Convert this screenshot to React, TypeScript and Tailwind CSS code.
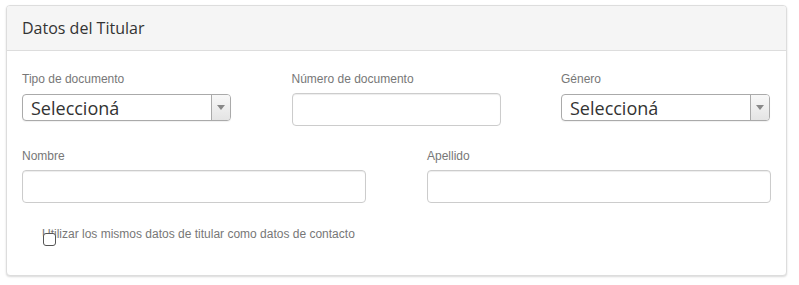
import React from "react";

function SelectBox() {
  return (
    <div className="flex h-[27px] w-full items-stretch overflow-hidden rounded-[4px] border border-[#aaa] bg-white shadow-[0_1px_1px_rgba(0,0,0,0.06)]">
      <div className="flex flex-1 items-center pl-[8px] font-['Open_Sans',sans-serif] text-[18px] leading-none text-[#333]">
        Seleccioná
      </div>
      <div className="flex w-[19px] items-center justify-center border-l border-[#aaa] bg-gradient-to-b from-[#f8f8f8] to-[#e4e4e4]">
        <span className="block h-0 w-0 border-x-[4px] border-t-[5px] border-x-transparent border-t-[#888]" />
      </div>
    </div>
  );
}

function TextInput() {
  return (
    <div className="h-[33px] w-full rounded-[4px] border border-[#ccc] bg-white shadow-[inset_0_1px_1px_rgba(0,0,0,0.075)]" />
  );
}

function Label({ children }: { children: React.ReactNode }) {
  return (
    <div className="font-['Liberation_Sans',Arial,sans-serif] text-[12px] leading-[16px] text-[#777]">
      {children}
    </div>
  );
}

export default function App() {
  return (
    <div className="h-[285px] w-[799px] bg-white pl-[6px] pt-[5px]">
      <div className="h-[271px] w-[781px] overflow-hidden rounded-[4px] border border-[#ddd] bg-white shadow-[0_1px_2px_rgba(0,0,0,0.15)]">
        <div className="flex h-[45px] items-center border-b border-[#ddd] bg-[#f5f5f5] px-[15px] font-['Open_Sans',sans-serif] text-[16px] text-[#333]">
          Datos del Titular
        </div>
        <div className="px-[15px] pt-[20px]">
          <div className="grid grid-cols-[209px_209px_209px] gap-x-[60.5px]">
            <div>
              <Label>Tipo de documento</Label>
              <div className="mt-[7px]">
                <SelectBox />
              </div>
            </div>
            <div>
              <Label>Número de documento</Label>
              <div className="mt-[6px]">
                <TextInput />
              </div>
            </div>
            <div>
              <Label>Género</Label>
              <div className="mt-[7px]">
                <SelectBox />
              </div>
            </div>
          </div>
          <div className="mt-[22px] grid grid-cols-[344px_344px] gap-x-[61px]">
            <div>
              <Label>Nombre</Label>
              <div className="mt-[6px]">
                <TextInput />
              </div>
            </div>
            <div>
              <Label>Apellido</Label>
              <div className="mt-[6px]">
                <TextInput />
              </div>
            </div>
          </div>
          <div className="relative mt-[23px] pl-[20px]">
            <Label>Utilizar los mismos datos de titular como datos de contacto</Label>
            <span className="absolute left-[21px] top-[7px] block h-[13px] w-[13px] rounded-[3px] border border-[#555] bg-white" />
          </div>
        </div>
      </div>
    </div>
  );
}
